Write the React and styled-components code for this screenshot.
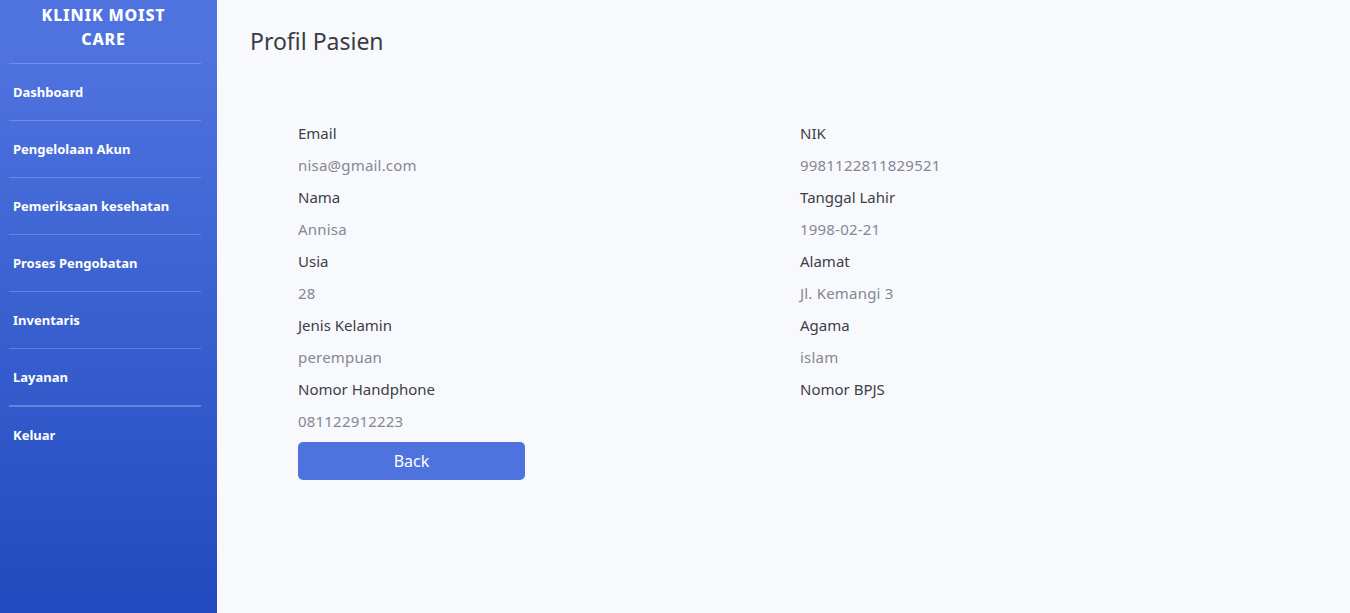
import styled, { createGlobalStyle } from 'styled-components';

const GlobalStyle = createGlobalStyle`
  html, body {
    margin: 0;
    padding: 0;
    height: 100%;
  }
  body {
    font-family: "Noto Sans", "Open Sans", sans-serif;
    background: #f8f9fc;
  }
  #root {
    height: 100%;
  }
`;

const Wrapper = styled.div`
  display: flex;
  min-height: 613px;
  height: 100%;
`;

const Sidebar = styled.nav`
  width: 217px;
  flex-shrink: 0;
  background-image: linear-gradient(180deg, #4e73df 10%, #224abe 100%);
  display: flex;
  flex-direction: column;
`;

const Brand = styled.div`
  color: #fff;
  font-weight: 800;
  font-size: 16px;
  line-height: 24px;
  letter-spacing: 0.05rem;
  text-transform: uppercase;
  text-align: center;
  padding: 3px 40px 0 30px;
  height: 60px;
`;

const Divider = styled.hr`
  margin: 0 16px 0 9px;
  border: 0;
  border-top: ${(p) => (p.$thick ? '2px solid rgba(255, 255, 255, 0.25)' : '1px solid rgba(255, 255, 255, 0.2)')};
`;

const NavLink = styled.a`
  display: flex;
  align-items: center;
  height: 56px;
  padding: 0 13px;
  color: #fff;
  font-size: 13px;
  font-weight: 700;
  text-decoration: none;
  cursor: pointer;
`;

const Main = styled.main`
  flex: 1;
  padding: 24px 32px 0 32px;
`;

const Title = styled.h1`
  margin: 0 0 63px 1px;
  font-size: 23px;
  font-weight: 400;
  line-height: 34px;
  color: #3a3b45;
`;

const Details = styled.div`
  padding-left: 49px;
`;

const Grid = styled.div`
  display: grid;
  grid-template-columns: 502px 502px;
`;

const Column = styled.div`
  display: flex;
  flex-direction: column;
`;

const Label = styled.p`
  margin: 0 0 8px 0;
  font-size: 15px;
  line-height: 24px;
  color: #3d3e48;
`;

const Value = styled.p`
  margin: 0 0 8px 0;
  font-size: 15px;
  line-height: 24px;
  min-height: 24px;
  color: #858796;
  letter-spacing: 0.2px;
`;

const BackButton = styled.button`
  width: 227px;
  height: 38px;
  margin-top: 1px;
  border: none;
  border-radius: 5px;
  background: #4e73df;
  color: #fff;
  font-family: inherit;
  font-size: 16px;
  cursor: pointer;
`;

const menu = [
  'Dashboard',
  'Pengelolaan Akun',
  'Pemeriksaan kesehatan',
  'Proses Pengobatan',
  'Inventaris',
  'Layanan',
  'Keluar',
];

const left = [
  ['Email', 'nisa@gmail.com'],
  ['Nama', 'Annisa'],
  ['Usia', '28'],
  ['Jenis Kelamin', 'perempuan'],
  ['Nomor Handphone', '081122912223'],
];

const right = [
  ['NIK', '9981122811829521'],
  ['Tanggal Lahir', '1998-02-21'],
  ['Alamat', 'Jl. Kemangi 3'],
  ['Agama', 'islam'],
  ['Nomor BPJS', ''],
];

const Field = ({ label, value }) => (
  <>
    <Label>{label}</Label>
    <Value>{value}</Value>
  </>
);

export default function App() {
  return (
    <>
      <GlobalStyle />
      <Wrapper>
        <Sidebar>
          <Brand>Klinik Moist Care</Brand>
          {menu.map((item, i) => (
            <div key={item}>
              <Divider $thick={i === menu.length - 1} />
              <NavLink>{item}</NavLink>
            </div>
          ))}
        </Sidebar>
        <Main>
          <Title>Profil Pasien</Title>
          <Details>
            <Grid>
              <Column>
                {left.map(([l, v]) => (
                  <Field key={l} label={l} value={v} />
                ))}
              </Column>
              <Column>
                {right.map(([l, v]) => (
                  <Field key={l} label={l} value={v} />
                ))}
              </Column>
            </Grid>
            <BackButton>Back</BackButton>
          </Details>
        </Main>
      </Wrapper>
    </>
  );
}
